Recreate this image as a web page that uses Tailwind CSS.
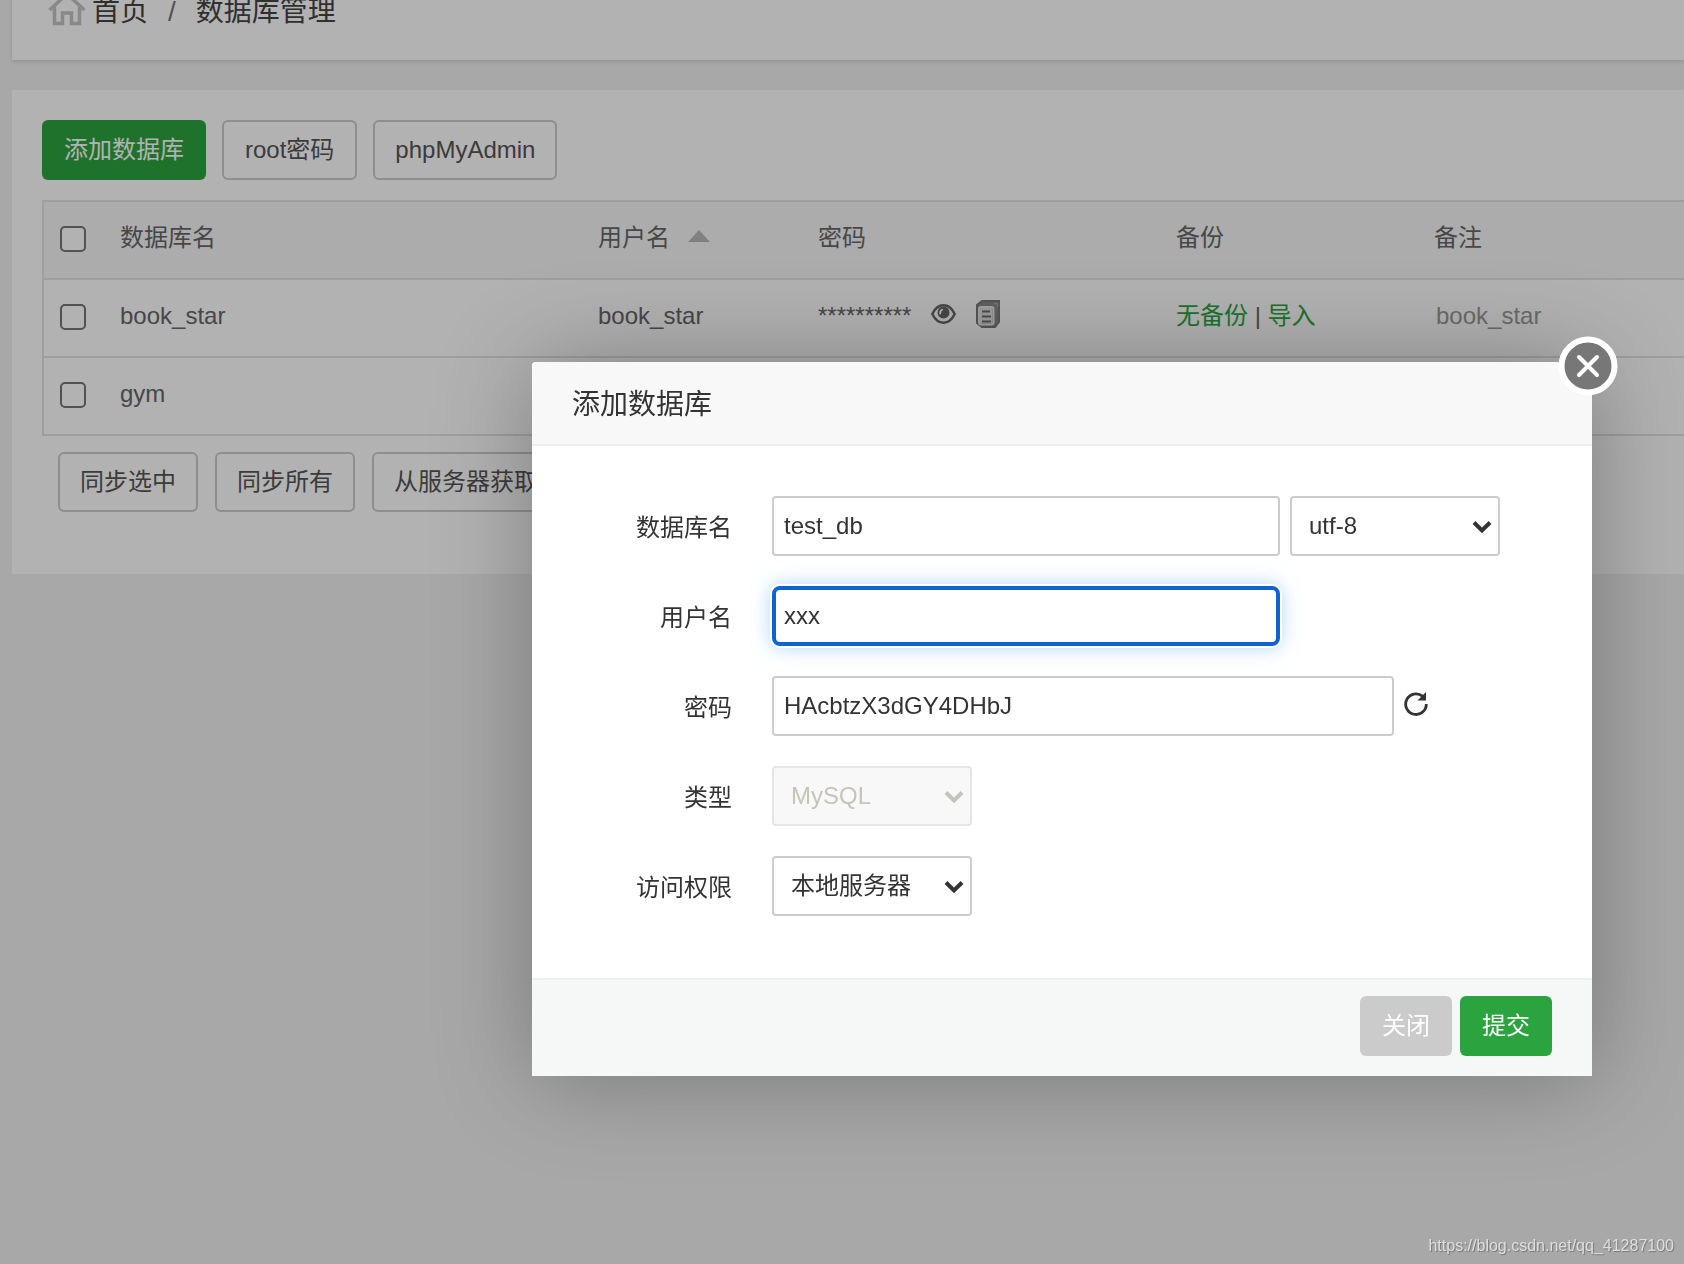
<!DOCTYPE html>
<html lang="zh-CN">
<head>
<meta charset="utf-8">
<meta name="viewport" content="width=device-width, initial-scale=1">
<title>数据库管理</title>
<script src="https://cdn.jsdelivr.net/npm/@tailwindcss/browser@4"></script>
</head>
<body class="min-h-screen overflow-hidden bg-[#f1f1f1] pl-3 font-['Liberation_Sans','Noto_Sans_CJK_SC',sans-serif] text-2xl text-[#666]">

<nav aria-label="breadcrumb" class="-mt-9 flex h-24 items-center bg-white pl-9 text-[28px] text-[#444] shadow-[0_2px_4px_rgba(0,0,0,0.12)]">
  <svg class="mb-2 h-9 w-[38px] text-[#c4c4c4]" viewBox="0 0 38 36" fill="none" stroke="currentColor" stroke-width="3.500" aria-hidden="true">
    <path d="M1.500 20 19 4l17.500 16M6.500 17v16.500h8V23h9v10.500h8V17"/>
  </svg>
  <a href="#" class="ml-1.5">首页</a>
  <span class="mx-5 text-[#777]">/</span>
  <span>数据库管理</span>
</nav>

<main class="mt-[30px] bg-white pb-[62px] pl-[30px] pt-[30px]">
  <div class="flex gap-4">
    <button type="button" class="h-[60px] rounded-md bg-[#2ba43f] px-[22px] text-white">添加数据库</button>
    <button type="button" class="h-[60px] rounded-md border-2 border-[#ccc] px-[21px] text-[#555]">root密码</button>
    <button type="button" class="h-[60px] rounded-md border-2 border-[#ccc] px-5 text-[#555]">phpMyAdmin</button>
  </div>

  <table class="mt-5 w-full table-fixed border-separate border-spacing-0 border-l-2 border-t-2 border-[#e2e2e2] text-left">
    <colgroup>
      <col class="w-[60px]"><col class="w-[478px]"><col class="w-[220px]"><col class="w-[358px]"><col class="w-[258px]"><col>
    </colgroup>
    <thead class="bg-[#f6f6f6]">
      <tr class="h-[78px]">
        <th class="border-b-2 border-[#e2e2e2] pb-0.5 pl-4 font-normal"><input type="checkbox" aria-label="全选" class="block h-[26px] w-[26px] appearance-none rounded-[5px] border-2 border-[#767676] bg-white"></th>
        <th class="border-b-2 border-[#e2e2e2] pb-1 pl-4 font-normal">数据库名</th>
        <th class="border-b-2 border-[#e2e2e2] pb-1 pl-4 font-normal">
          <span class="flex items-center gap-[18px]">用户名
            <svg class="mb-1 h-3 w-[22px] text-[#b8b8b8]" viewBox="0 0 22 12" fill="currentColor" aria-hidden="true"><path d="M11 0 22 12H0z"/></svg>
          </span>
        </th>
        <th class="border-b-2 border-[#e2e2e2] pb-1 pl-4 font-normal">密码</th>
        <th class="border-b-2 border-[#e2e2e2] pb-1 pl-4 font-normal">备份</th>
        <th class="border-b-2 border-[#e2e2e2] pb-1 pl-4 font-normal">备注</th>
      </tr>
    </thead>
    <tbody>
      <tr class="h-[78px]">
        <td class="border-b-2 border-[#e2e2e2] pb-0.5 pl-4"><input type="checkbox" aria-label="book_star" class="block h-[26px] w-[26px] appearance-none rounded-[5px] border-2 border-[#767676] bg-white"></td>
        <td class="border-b-2 border-[#e2e2e2] pb-1 pl-4">book_star</td>
        <td class="border-b-2 border-[#e2e2e2] pb-1 pl-4">book_star</td>
        <td class="border-b-2 border-[#e2e2e2] pb-1 pl-4">
          <span class="flex items-center gap-5">**********
            <button type="button" aria-label="显示密码" class="pb-1">
              <svg class="block h-5 w-[25px]" viewBox="0 0 25 20" aria-hidden="true">
                <path d="M1.300 10C4 4.500 8 1.300 12.500 1.300S21 4.500 23.700 10C21 15.500 17 18.700 12.500 18.700S4 15.500 1.300 10z" fill="none" stroke="#666" stroke-width="2.500"/>
                <circle cx="12.500" cy="8.500" r="6" fill="#666"/>
                <path d="M9.200 9.500a3.500 3.500 0 0 1 2-3.800" fill="none" stroke="#fff" stroke-width="1.800" stroke-linecap="round"/>
              </svg>
            </button>
            <button type="button" aria-label="复制密码" class="pb-1">
              <svg class="block h-7 w-6" viewBox="0 0 24 28" aria-hidden="true">
                <path d="M6 1h17v21l-4 5H6l-5-4V5z" fill="#888" stroke="#7a7a7a" stroke-width="2"/>
                <path d="M18 3.500h3.500V7" fill="none" stroke="#aaa" stroke-width="1.500"/>
                <rect x="3" y="7" width="14.500" height="17.500" rx="2" fill="#888" stroke="#e8e8e8" stroke-width="2"/>
                <path d="M4 8h12.500v15.500H4z" fill="#e0e0e0"/>
                <path d="M6 11.500h8M6 16.500h9M6 21.500h9" stroke="#6c6c6c" stroke-width="2"/>
              </svg>
            </button>
          </span>
        </td>
        <td class="border-b-2 border-[#e2e2e2] pb-1 pl-4"><a href="#" class="text-[#2ba43f]">无备份</a> | <a href="#" class="text-[#2ba43f]">导入</a></td>
        <td class="border-b-2 border-[#e2e2e2] pb-1 pl-[18px] text-[#999]">book_star</td>
      </tr>
      <tr class="h-[78px]">
        <td class="border-b-2 border-[#e2e2e2] pb-0.5 pl-4"><input type="checkbox" aria-label="gym" class="block h-[26px] w-[26px] appearance-none rounded-[5px] border-2 border-[#767676] bg-white"></td>
        <td class="border-b-2 border-[#e2e2e2] pb-1 pl-4">gym</td>
        <td class="border-b-2 border-[#e2e2e2]"></td>
        <td class="border-b-2 border-[#e2e2e2]"></td>
        <td class="border-b-2 border-[#e2e2e2]"></td>
        <td class="border-b-2 border-[#e2e2e2]"></td>
      </tr>
    </tbody>
  </table>

  <div class="mt-4 flex gap-[17px] pl-4 text-[#555]">
    <button type="button" class="h-[60px] rounded-md border-2 border-[#ccc] px-5">同步选中</button>
    <button type="button" class="h-[60px] rounded-md border-2 border-[#ccc] px-5">同步所有</button>
    <button type="button" class="h-[60px] rounded-md border-2 border-[#ccc] px-5">从服务器获取</button>
  </div>
</main>

<div class="fixed inset-0 bg-black/30"></div>

<!-- dialog: add a database -->
<form role="dialog" aria-labelledby="dialog-title" class="absolute left-[532px] top-[362px] w-[1060px] rounded-t bg-white text-[#333] shadow-[2px_2px_100px_rgba(0,0,0,0.3)]">
  <h2 id="dialog-title" class="flex h-[84px] items-center rounded-t border-b-2 border-[#eee] bg-[#f8f8f8] pl-10 pt-1 text-[28px]">添加数据库</h2>

  <div class="flex flex-col gap-[30px] pb-[62px] pt-[50px]">
    <div class="flex h-[60px] items-center">
      <label for="db" class="w-[200px] pt-1 text-right">数据库名</label>
      <input id="db" type="text" value="test_db" class="ml-10 h-[60px] w-[508px] rounded border-2 border-[#ccc] px-2.5">
      <div class="relative ml-2.5">
        <select aria-label="字符集" class="block h-[60px] w-[210px] appearance-none rounded border-2 border-[#ccc] bg-white px-[17px]"><option>utf-8</option></select>
        <svg class="pointer-events-none absolute right-2 top-6 h-3.5 w-5" viewBox="0 0 20 14" fill="none" stroke="#333" stroke-width="4" aria-hidden="true"><path d="m2 2.500 8 8 8-8"/></svg>
      </div>
    </div>
    <div class="flex h-[60px] items-center">
      <label for="user" class="w-[200px] pt-1 text-right">用户名</label>
      <input id="user" type="text" value="xxx" class="ml-10 h-[60px] w-[508px] rounded-lg border-4 border-[#1062d0] px-2 shadow-[0_0_0_2px_#fff,0_0_20px_rgba(102,175,233,0.6)] outline-none">
    </div>
    <div class="flex h-[60px] items-center">
      <label for="pw" class="w-[200px] pt-1 text-right">密码</label>
      <input id="pw" type="text" value="HAcbtzX3dGY4DHbJ" class="ml-10 h-[60px] w-[622px] rounded border-2 border-[#ccc] px-2.5">
      <button type="button" aria-label="随机密码" class="ml-2.5 pb-1">
        <svg class="block h-6 w-6" viewBox="0 0 24 24" aria-hidden="true">
          <path d="M18.500 4.200A10.300 10.300 0 1 0 22.300 12" fill="none" stroke="#333" stroke-width="2.800"/>
          <path d="M22 0v8.500h-8.500z" fill="#333"/>
        </svg>
      </button>
    </div>
    <div class="flex h-[60px] items-center">
      <label for="type" class="w-[200px] pt-1 text-right">类型</label>
      <div class="relative ml-10">
        <select id="type" disabled class="block h-[60px] w-[200px] appearance-none rounded border-2 border-[#e6e6e6] bg-[#f8f8f8] px-[17px] text-[#c6c4b8] opacity-100"><option>MySQL</option></select>
        <svg class="pointer-events-none absolute right-2 top-6 h-3.5 w-5" viewBox="0 0 20 14" fill="none" stroke="#c6c4b8" stroke-width="4" aria-hidden="true"><path d="m2 2.500 8 8 8-8"/></svg>
      </div>
    </div>
    <div class="flex h-[60px] items-center">
      <label for="access" class="w-[200px] pt-1 text-right">访问权限</label>
      <div class="relative ml-10">
        <select id="access" class="block h-[60px] w-[200px] appearance-none rounded border-2 border-[#ccc] bg-white px-[17px]"><option>本地服务器</option></select>
        <svg class="pointer-events-none absolute right-2 top-6 h-3.5 w-5" viewBox="0 0 20 14" fill="none" stroke="#333" stroke-width="4" aria-hidden="true"><path d="m2 2.500 8 8 8-8"/></svg>
      </div>
    </div>
  </div>

  <div class="flex justify-end gap-2 border-t-2 border-[#eff1f1] bg-[#f6f8f8] pb-5 pr-10 pt-4 text-white">
    <button type="button" class="h-[60px] w-[92px] rounded-md bg-[#cbcbcb]">关闭</button>
    <button type="submit" class="h-[60px] w-[92px] rounded-md bg-[#2ba43f]">提交</button>
  </div>

  <button type="button" aria-label="关闭窗口" class="absolute -right-[26px] -top-[26px]">
    <svg class="block h-[60px] w-[60px]" viewBox="0 0 60 60" aria-hidden="true">
      <circle cx="30" cy="30" r="26.500" fill="#777" stroke="#fff" stroke-width="6"/>
      <path d="m21 21 18 18M39 21 21 39" stroke="#fff" stroke-width="4" stroke-linecap="round"/>
    </svg>
  </button>
</form>

<p class="absolute bottom-1.5 right-2.5 text-base text-[#dedede] [text-shadow:1px_1px_1px_rgba(0,0,0,0.3)]">https://blog.csdn.net/qq_41287100</p>

</body>
</html>
